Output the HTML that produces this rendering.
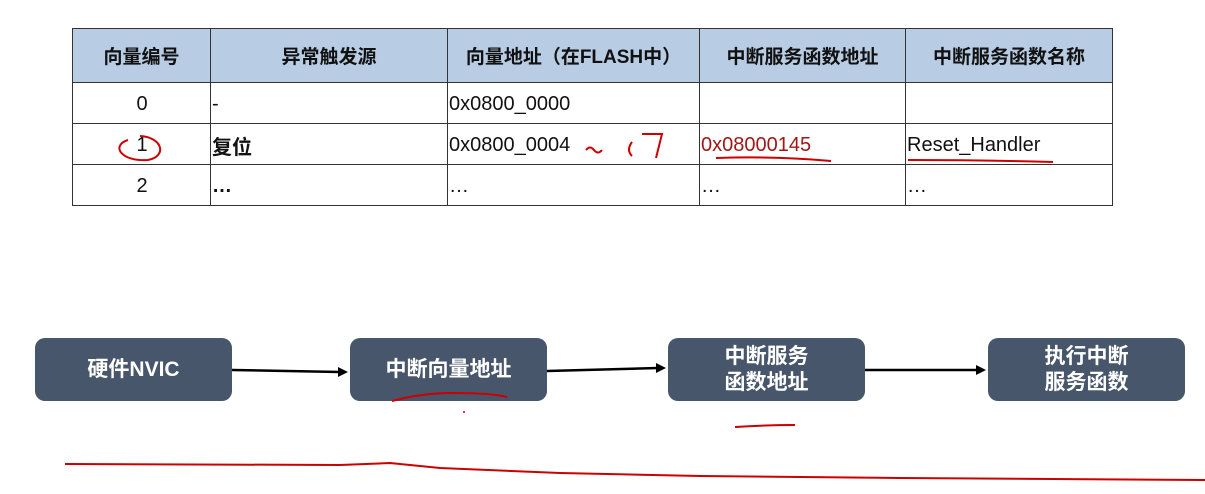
<!DOCTYPE html><html><head><meta charset="utf-8"><style>
body{margin:0;width:1205px;height:494px;background:#fff;position:relative;overflow:hidden;font-family:"Liberation Sans","Noto Sans CJK SC",sans-serif}
table{position:absolute;left:72px;top:28px;border-collapse:collapse;table-layout:fixed;width:1040px;font-size:20px;color:#111}
td{border:1.5px solid #333;padding:2px 0 0 1px;height:38px;vertical-align:middle;white-space:nowrap;overflow:hidden}
tr.h td{background:#b8cce4;height:53px;padding:0;text-align:center;font-weight:bold;font-size:19px}
td.c{text-align:center}
.box{position:absolute;background:#47566b;border-radius:10px;color:#fff;font-weight:bold;font-size:21px;display:flex;align-items:center;justify-content:center;text-align:center;line-height:26px;height:63px;width:197px;top:338px}
svg{position:absolute;left:0;top:0}
</style></head><body>
<table>
<colgroup><col style="width:138px"><col style="width:237px"><col style="width:252px"><col style="width:206px"><col style="width:207px"></colgroup>
<tr class="h"><td>向量编号</td><td>异常触发源</td><td>向量地址（在FLASH中）</td><td>中断服务函数地址</td><td>中断服务函数名称</td></tr>
<tr><td class="c">0</td><td>-</td><td>0x0800_0000</td><td></td><td></td></tr>
<tr><td class="c">1</td><td><b>复位</b></td><td>0x0800_0004</td><td style="color:#a01818">0x08000145</td><td>Reset_Handler</td></tr>
<tr><td class="c">2</td><td><b>…</b></td><td>…</td><td>…</td><td>…</td></tr>
</table>
<div class="box" style="left:35px">硬件NVIC</div>
<div class="box" style="left:350px">中断向量地址</div>
<div class="box" style="left:668px">中断服务<br>函数地址</div>
<div class="box" style="left:988px">执行中断<br>服务函数</div>
<svg width="1205" height="494">
<g stroke="#000" stroke-width="2.5" fill="#000">
<line x1="232" y1="370" x2="340" y2="372"/><polygon points="348,372 338,367 338,377" stroke="none"/>
<line x1="547" y1="371" x2="658" y2="368"/><polygon points="666,368 656,363 656,373" stroke="none"/>
<line x1="865" y1="370" x2="978" y2="370"/><polygon points="986,370 976,365 976,375" stroke="none"/>
</g>
<g stroke="#c00" stroke-width="2" fill="none">
<path d="M128 140 C110 146,122 162,148 160 C168 156,162 137,140 136"/>
<path d="M586 150 q4-5 8 0 q4 5 8 0"/>
<path d="M632 142 q-6 8 0 14 M642 134 h20 l-6 24"/>
<path d="M716 158 q60-2 115 3"/>
<path d="M908 160 q70 0 145 2"/>
<path d="M392 401 q30-8 60-8 q40 0 55 4"/>
<path d="M735 427 q30-2 60-2"/>
<path d="M65 464 L340 465 L390 463 L440 468 L560 473 L700 476 L900 478 L1205 480"/>
</g>
<circle cx="464" cy="412" r="1" fill="#c00"/>
</svg>
</body></html>
